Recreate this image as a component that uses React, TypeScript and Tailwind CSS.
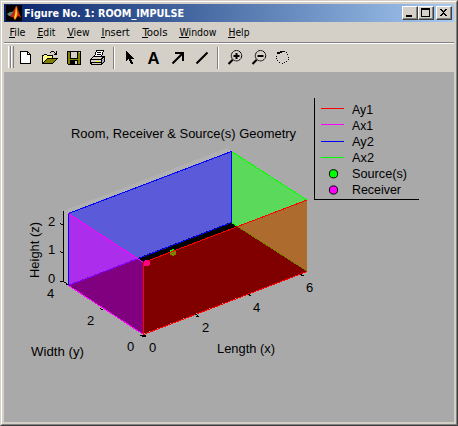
import React from "react";

const menus = [
  { t: "File", w: "w-[28px]", len: 16, u: 6 },
  { t: "Edit", w: "w-[30px]", len: 18, u: 6 },
  { t: "View", w: "w-[34px]", len: 22, u: 7 },
  { t: "Insert", w: "w-[41px]", len: 28, u: 4 },
  { t: "Tools", w: "w-[37px]", len: 25, u: 6 },
  { t: "Window", w: "w-[49px]", len: 37, u: 10 },
  { t: "Help", w: "w-[32px]", len: 21, u: 7 },
];

function Label({ x, y, w, children, size = 13, rotate }: { x: number; y: number; w?: number; children: React.ReactNode; size?: number; rotate?: boolean }) {
  return (
    <text x={x} y={y} textLength={w} lengthAdjust="spacingAndGlyphs" fontSize={size} fill="#000" transform={rotate ? `rotate(-90 ${x} ${y})` : undefined}>
      {children}
    </text>
  );
}

function WinButton({ children }: { children: React.ReactNode }) {
  return (
    <div className="h-[14px] w-[16px] border border-t-white border-l-white border-r-[#404040] border-b-[#404040] bg-[#d4d0c8]">
      <div className="h-[12px] w-[14px] border-r border-b border-[#808080]">
        <svg width="13" height="11" viewBox="0 0 13 11" shapeRendering="crispEdges" className="block">{children}</svg>
      </div>
    </div>
  );
}

function Logo() {
  return (
    <svg width="16" height="16" viewBox="0 0 16 16" className="ml-[2px] block shrink-0">
      <rect width="16" height="16" fill="#000" />
      <path d="M1 9L4 7L6 7L8 5L7 8L5 11L3 11Z" fill="#5e8584" />
      <path d="M4 11L6 9L8 5L10 1L11 1L12 5L14 10L15.5 13L12 11L9 15L8 14L7 12L5 12Z" fill="#c82808" />
      <path d="M10 1L11 4L11.5 10L9 15L8 13L9 9Z" fill="#ff9a1d" />
      <path d="M10 4L10.7 8L9 13.5L8.5 12L9.5 9Z" fill="#fff04a" />
    </svg>
  );
}

function Toolbar() {
  return (
    <svg width="450" height="28" viewBox="4 44 450 28" className="block" shapeRendering="crispEdges">
      <g>
        <path d="M8.5 46V68M11.5 46V68" stroke="#fff" />
        <path d="M10.5 46V68M13.5 46V68M113.5 47V69M217.5 47V69" stroke="#808080" />
        <path d="M114.5 47V69M218.5 47V69" stroke="#fff" />
      </g>
      <path d="M20.5 51.5H27.5L30.5 54.5V63.5H20.5Z" fill="#fff" stroke="#000" />
      <path d="M27.5 51.5V54.5H30.5" fill="none" stroke="#000" />
      <path d="M42.5 63V55.5H43.5L44.5 54.5H46.5L47.5 55.5H52.5V58.5" fill="#ffff80" stroke="#000" />
      <path d="M43 56H52V59H47L43 63Z" fill="#ffff80" />
      <path d="M42.5 63.5L47.5 58.5H57.5L52.5 63.5Z" fill="#808000" stroke="#000" />
      <path d="M50 52.5H51M51 51.5H54M54 52.5H55M55 53.5H57M56.5 51V55M54 54.5H57" stroke="#000" />
      <path d="M67.5 51.5H80.5V64.5H68.5L67.5 63.5Z" fill="#808000" stroke="#000" />
      <path d="M70 52H78V58H70Z" fill="#d4d0c8" />
      <path d="M70 58.5H78M70.5 52V58M77.5 52V58" stroke="#000" fill="none" />
      <path d="M70 60H78V64H70Z" fill="#000" />
      <path d="M75 61H77V64H75ZM79 52H80V53H79Z" fill="#d4d0c8" />
      <path d="M94.5 56.5L96.5 50.5H103.5L101.5 56.5Z" fill="#fff" stroke="#000" />
      <path d="M97 52.5H101M97 54.5H101" stroke="#000" />
      <path d="M90.5 59.5L93.5 56.5H104.5V61.5L101.5 64.5H91.5L90.5 62.5Z" fill="#d4d0c8" stroke="#000" />
      <path d="M91 59.5H101L104 56.5M101.5 59V64M91 62.5H101" fill="none" stroke="#000" />
      <path d="M96 61H99V62H96Z" fill="#ffff00" />
      <path d="M102 60.5H103M103 59.5H104M102 62.5H103M103 61.5H104" stroke="#808080" />
      <path d="M126 51V61H127V60H128V59H129V61H130V63H131V64H133V62H132V60H131V59H134V58H133V57H132V56H131V55H130V54H129V53H128V52H127V51Z" fill="#000" />
      <text x="147.5" y="64" fontSize="16" fontWeight="700" textLength="12" lengthAdjust="spacingAndGlyphs" fontFamily="'Liberation Sans', Arial, sans-serif">A</text>
      <g shapeRendering="auto" stroke="#000" fill="none">
        <path d="M172.5 63.5L182 54M196.5 63.5L207.5 52.5" strokeWidth="2.1" />
        <path d="M175 53H183V61" strokeWidth="2" />
        {[236.5, 260.5].map((x) => (
          <g key={x}>
            <circle cx={x} cy="55.7" r="5.2" strokeWidth="1" strokeDasharray="2.6 0.35" />
            <path d={`M${x - 3} 56H${x + 3}`} strokeWidth="2" />
            <path d={`M${x - 3.8} 59.8L${x - 8} 64`} strokeWidth="2" />
          </g>
        ))}
        <path d="M236.5 53V59" strokeWidth="2" />
      </g>
      <path d="M277 52h3v-1h5v1h-3v1h-2v1h-3zM286 52h1v1h-1zM287 54h1v1h-1zM288 57h1v1h-1zM288 59h1v1h-1zM286 61h1v1h-1zM284 62h1v1h-1zM282 63h1v1h-1zM279 62h1v1h-1zM277 60h1v1h-1zM276 58h1v1h-1zM276 56h1v1h-1z" fill="#000" />
    </svg>
  );
}

function Plot() {
  const legend = [["Ay1", "#f00", 21], ["Ax1", "#f0f", 21], ["Ay2", "#00f", 22], ["Ax2", "#0f0", 22]] as const;
  const ys = [108, 124, 141, 157];
  return (
    <svg width="450" height="350" viewBox="4 72 450 350" className="block" fontFamily="'Liberation Sans', Arial, sans-serif">
      <g shapeRendering="crispEdges">
        <path d="M63 211L227 148L307 199V272L231 222L63 285Z" fill="#b1b1b1" />
        <path d="M231 151L307 200V271L231 222Z" fill="#5bd95b" />
        <path d="M68 213L231 151V222L68 285Z" fill="#5b5bd9" />
        <path d="M68 285L231 222L307 271L143 334Z" fill="#000" />
        <path d="M231.5 151.5L307 200M231.5 222.5L307 271" stroke="#0f0" />
        <path d="M68.5 285.5V213.5L231.5 151.5V222.5L68.5 285.5" fill="none" stroke="#00f" />
        <circle cx="173" cy="252.5" r="3.2" fill="#0f0" />
        <circle cx="147" cy="263" r="3.2" fill="#f0f" />
        <path d="M68 213L143 262V334L68 285Z" fill="#f0f" fillOpacity=".5" />
        <path d="M68.5 285V214" stroke="#00f" />
        <path d="M68.5 213.5L143.5 262.5M68.5 285.5L143.5 334.5" stroke="#f0f" />
        <path d="M143 262L307 200V271L143 334Z" fill="#f00" fillOpacity=".5" />
        <path d="M307 200L143.5 262.5V334.5L307 271.5" fill="none" stroke="#f00" />
        <path d="M144 261h5v4h-1v1h-4z" fill="#ff0080" />
        <path d="M63.5 211V282M61 224.5H63M60 223.5H61M61 252.5H63M60 251.5H61M60 281.5H64M64 282.5H66M66 283.5H67M66 284.5H68M100 308.5H101M101 309.5H103M140 335.5H142M142 336.5H144M141 335.5H146M144 336.5H146M195 314.5H197M197 315.5H198M196 316.5H199M248 294.5H250M249 295.5H251M300 274.5H302M301 275.5H304" fill="none" stroke="#000" />
        <path d="M314.5 98V199.5H419" fill="none" stroke="#000" />
        {legend.map(([n, c], i) => <path key={n} d={`M321 ${ys[i] + 0.5}H344`} stroke={c} />)}
      </g>
      <circle cx="333.5" cy="173.8" r="4.1" fill="#0f0" stroke="#000" />
      <circle cx="333.5" cy="190" r="4.1" fill="#f0f" stroke="#000" />
      {legend.map(([n, , w], i) => <Label key={n} x={352} y={[114, 130, 146, 162][i]} w={w}>{n}</Label>)}
      <Label x={352} y={178} w={55}>Source(s)</Label>
      <Label x={352} y={194} w={49}>Receiver</Label>
      <Label x={71} y={138} w={225}>Room, Receiver &amp; Source(s) Geometry</Label>
      <Label x={39} y={278} w={56} rotate>Height (z)</Label>
      <Label x={31} y={356} w={53}>Width (y)</Label>
      <Label x={217} y={353} w={58}>Length (x)</Label>
      <Label x={48} y={226}>2</Label>
      <Label x={48} y={254}>1</Label>
      <Label x={48} y={283}>0</Label>
      <Label x={47} y={298}>4</Label>
      <Label x={87} y={325}>2</Label>
      <Label x={127} y={351}>0</Label>
      <Label x={149} y={352}>0</Label>
      <Label x={202} y={332}>2</Label>
      <Label x={253} y={312}>4</Label>
      <Label x={306} y={292}>6</Label>
    </svg>
  );
}

export default function App() {
  return (
    <div className="h-[426px] w-[458px] overflow-hidden border border-t-[#d4d0c8] border-l-[#d4d0c8] border-r-[#404040] border-b-[#404040] bg-[#d4d0c8]">
      <div className="flex h-[424px] w-[456px] flex-col border border-t-white border-l-white border-r-[#808080] border-b-[#808080] p-[2px]">
        <header className="flex h-[18px] shrink-0 items-center bg-linear-to-r from-[#0a246a] to-[#a6caf0]">
          <Logo />
          <svg width="170" height="18" className="ml-[1px]">
            <text x="1" y="13" fontSize="11" fontWeight="700" fill="#fff" textLength="160" lengthAdjust="spacingAndGlyphs" fontFamily="'DejaVu Sans Condensed', 'DejaVu Sans', sans-serif">Figure No. 1: ROOM_IMPULSE</text>
          </svg>
          <div className="mr-[2px] ml-auto flex">
            <WinButton><path d="M3 8H9V10H3Z" fill="#000" /></WinButton>
            <WinButton><path d="M2 1H11V10H2ZM3 3V9H10V3Z" fill="#000" fillRule="evenodd" /></WinButton>
            <div className="ml-[2px]"><WinButton><path d="M3 2h2v1h1v1h1v-1h1v-1h2v1h-1v1h-1v1h-1v1h1v1h1v1h1v1h-2v-1h-1v-1h-1v1h-1v1h-2v-1h1v-1h1v-1h1v-1h-1v-1h-1v-1h-1z" fill="#000" /></WinButton></div>
          </div>
        </header>
        <nav className="flex h-[20px] shrink-0 items-start pl-[5px]">
          {menus.map((m) => (
            <div key={m.t} className={m.w}>
              <svg width="42" height="20" className="block">
                <text x="0.5" y="14" fontSize="11" textLength={m.len} lengthAdjust="spacingAndGlyphs" fontFamily="'DejaVu Sans Condensed', 'DejaVu Sans', sans-serif">{m.t}</text>
                <path d={`M0 15.5H${m.u}`} stroke="#000" />
              </svg>
            </div>
          ))}
        </nav>
        <div className="h-[2px] shrink-0 border-t border-b border-t-[#808080] border-b-white" />
        <Toolbar />
        <main className="h-[350px] shrink-0 bg-[#a9a9a9]">
          <Plot />
        </main>
      </div>
    </div>
  );
}
